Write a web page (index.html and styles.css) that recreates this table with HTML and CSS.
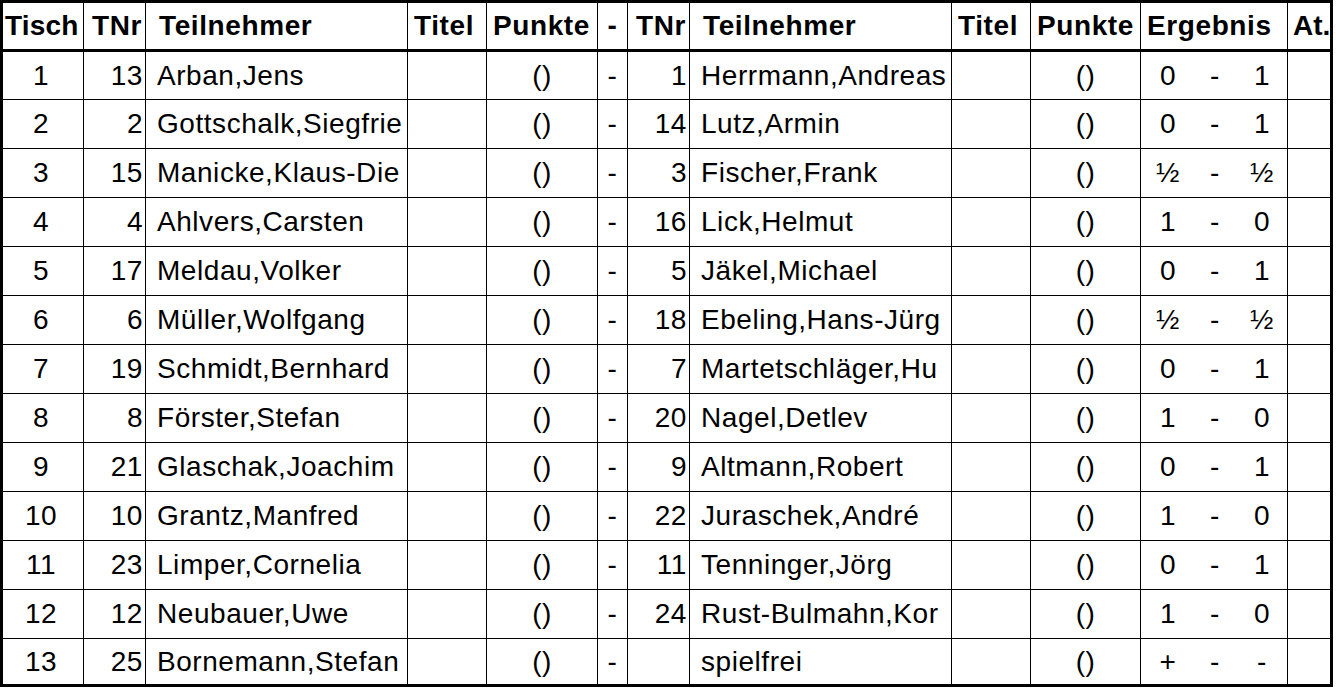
FILE: index.html
```html
<!DOCTYPE html>
<html lang="de">
<head>
<meta charset="utf-8">
<title>Paarungen</title>
<link rel="stylesheet" href="styles.css">
</head>
<body>
<table class="sheet">
  <thead>
    <tr>
      <th class="h-tisch">Tisch</th>
      <th class="h-tnr">TNr</th>
      <th class="h-name">Teilnehmer</th>
      <th class="h-titel">Titel</th>
      <th class="h-pts">Punkte</th>
      <th class="h-sep">-</th>
      <th class="h-tnr">TNr</th>
      <th class="h-name">Teilnehmer</th>
      <th class="h-titel">Titel</th>
      <th class="h-pts2">Punkte</th>
      <th class="h-res">Ergebnis</th>
      <th class="h-at">At.</th>
    </tr>
  </thead>
  <tbody>
    <tr><td class="tisch">1</td><td class="tnr">13</td><td class="name">Arban,Jens</td><td></td><td class="pts">()</td><td class="sep">-</td><td class="tnr">1</td><td class="name">Herrmann,Andreas</td><td></td><td class="pts">()</td><td><div class="res"><span>0</span><span>-</span><span>1</span></div></td><td></td></tr>
    <tr><td class="tisch">2</td><td class="tnr">2</td><td class="name">Gottschalk,Siegfrie</td><td></td><td class="pts">()</td><td class="sep">-</td><td class="tnr">14</td><td class="name">Lutz,Armin</td><td></td><td class="pts">()</td><td><div class="res"><span>0</span><span>-</span><span>1</span></div></td><td></td></tr>
    <tr><td class="tisch">3</td><td class="tnr">15</td><td class="name">Manicke,Klaus-Die</td><td></td><td class="pts">()</td><td class="sep">-</td><td class="tnr">3</td><td class="name">Fischer,Frank</td><td></td><td class="pts">()</td><td><div class="res"><span>½</span><span>-</span><span>½</span></div></td><td></td></tr>
    <tr><td class="tisch">4</td><td class="tnr">4</td><td class="name">Ahlvers,Carsten</td><td></td><td class="pts">()</td><td class="sep">-</td><td class="tnr">16</td><td class="name">Lick,Helmut</td><td></td><td class="pts">()</td><td><div class="res"><span>1</span><span>-</span><span>0</span></div></td><td></td></tr>
    <tr><td class="tisch">5</td><td class="tnr">17</td><td class="name">Meldau,Volker</td><td></td><td class="pts">()</td><td class="sep">-</td><td class="tnr">5</td><td class="name">Jäkel,Michael</td><td></td><td class="pts">()</td><td><div class="res"><span>0</span><span>-</span><span>1</span></div></td><td></td></tr>
    <tr><td class="tisch">6</td><td class="tnr">6</td><td class="name">Müller,Wolfgang</td><td></td><td class="pts">()</td><td class="sep">-</td><td class="tnr">18</td><td class="name">Ebeling,Hans-Jürg</td><td></td><td class="pts">()</td><td><div class="res"><span>½</span><span>-</span><span>½</span></div></td><td></td></tr>
    <tr><td class="tisch">7</td><td class="tnr">19</td><td class="name">Schmidt,Bernhard</td><td></td><td class="pts">()</td><td class="sep">-</td><td class="tnr">7</td><td class="name">Martetschläger,Hu</td><td></td><td class="pts">()</td><td><div class="res"><span>0</span><span>-</span><span>1</span></div></td><td></td></tr>
    <tr><td class="tisch">8</td><td class="tnr">8</td><td class="name">Förster,Stefan</td><td></td><td class="pts">()</td><td class="sep">-</td><td class="tnr">20</td><td class="name">Nagel,Detlev</td><td></td><td class="pts">()</td><td><div class="res"><span>1</span><span>-</span><span>0</span></div></td><td></td></tr>
    <tr><td class="tisch">9</td><td class="tnr">21</td><td class="name">Glaschak,Joachim</td><td></td><td class="pts">()</td><td class="sep">-</td><td class="tnr">9</td><td class="name">Altmann,Robert</td><td></td><td class="pts">()</td><td><div class="res"><span>0</span><span>-</span><span>1</span></div></td><td></td></tr>
    <tr><td class="tisch">10</td><td class="tnr">10</td><td class="name">Grantz,Manfred</td><td></td><td class="pts">()</td><td class="sep">-</td><td class="tnr">22</td><td class="name">Juraschek,André</td><td></td><td class="pts">()</td><td><div class="res"><span>1</span><span>-</span><span>0</span></div></td><td></td></tr>
    <tr><td class="tisch">11</td><td class="tnr">23</td><td class="name">Limper,Cornelia</td><td></td><td class="pts">()</td><td class="sep">-</td><td class="tnr">11</td><td class="name">Tenninger,Jörg</td><td></td><td class="pts">()</td><td><div class="res"><span>0</span><span>-</span><span>1</span></div></td><td></td></tr>
    <tr><td class="tisch">12</td><td class="tnr">12</td><td class="name">Neubauer,Uwe</td><td></td><td class="pts">()</td><td class="sep">-</td><td class="tnr">24</td><td class="name">Rust-Bulmahn,Kor</td><td></td><td class="pts">()</td><td><div class="res"><span>1</span><span>-</span><span>0</span></div></td><td></td></tr>
    <tr><td class="tisch">13</td><td class="tnr">25</td><td class="name">Bornemann,Stefan</td><td></td><td class="pts">()</td><td class="sep">-</td><td class="tnr"></td><td class="name">spielfrei</td><td></td><td class="pts">()</td><td><div class="res"><span>+</span><span>-</span><span>-</span></div></td><td></td></tr>
  </tbody>
</table>
</body>
</html>
```

FILE: styles.css
```css
html, body {
  margin: 0;
  padding: 0;
  background: #ffffff;
}

.sheet {
  box-sizing: border-box;
  width: 1333px;
  table-layout: fixed;
  border-collapse: separate;
  border-spacing: 0;
  border: 3px solid #000;
  font-family: "Liberation Sans", Arial, sans-serif;
  font-size: 28px;
  color: #000;
}

.sheet th,
.sheet td {
  box-sizing: border-box;
  padding: 0;
  border-right: 1px solid #000;
  border-bottom: 1px solid #000;
  white-space: nowrap;
  overflow: hidden;
  vertical-align: middle;
  line-height: 32px;
  letter-spacing: 0.55px;
}

.sheet th:last-child,
.sheet td:last-child {
  border-right: none;
}

.sheet th {
  height: 49px;
  border-bottom: 3px solid #000;
  font-weight: bold;
  text-align: left;
  letter-spacing: 0.6px;
}

.sheet tbody td {
  height: 49px;
}

.sheet tbody tr:first-child td {
  height: 48px;
}

.sheet tbody tr:last-child td {
  height: 45px;
  border-bottom: none;
}

/* column widths */
.sheet th:nth-child(1) { width: 81px; padding-left: 2px; }
.sheet th:nth-child(2) { width: 62px; }
.sheet th:nth-child(3) { width: 262px; }
.sheet th:nth-child(4) { width: 79px; }
.sheet th:nth-child(5) { width: 111px; }
.sheet th:nth-child(6) { width: 30px; }
.sheet th:nth-child(7) { width: 62px; }
.sheet th:nth-child(8) { width: 262px; }
.sheet th:nth-child(9) { width: 79px; }
.sheet th:nth-child(10) { width: 110px; }
.sheet th:nth-child(11) { width: 147px; }
.sheet th:nth-child(12) { width: 42px; }

.h-tisch { letter-spacing: 0.2px !important; }
.h-tnr { text-align: right !important; padding-right: 3px !important; }
.h-name { padding-left: 13px !important; }
.h-titel { padding-left: 6px !important; }
.h-pts { padding-left: 6px !important; }
.h-pts2 { padding-left: 6px !important; }
.h-sep { text-align: center !important; }
.h-res { padding-left: 6px !important; }
.h-at {
  padding-left: 5px !important;
  letter-spacing: 0 !important;
  overflow: visible !important;
}

.tisch { text-align: center; padding-right: 4px !important; }
.tnr { text-align: right; padding-right: 2px !important; }
.name { padding-left: 11px !important; }
.pts { text-align: center; }
.sep { text-align: center; }

.res {
  display: grid;
  grid-template-columns: 46px 48px 46px;
  padding-left: 4px;
  text-align: center;
}
```
